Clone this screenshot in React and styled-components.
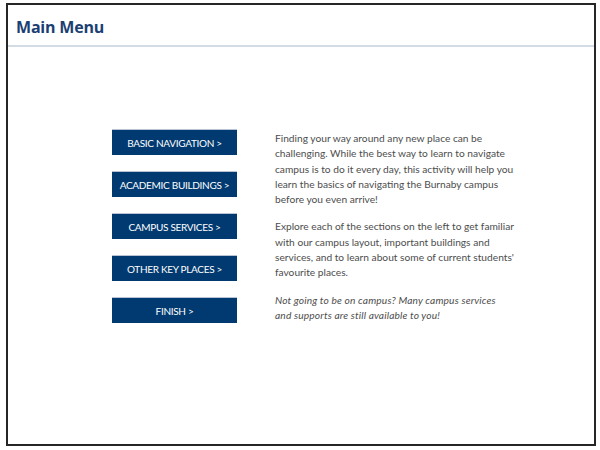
import React from "react";
import styled, { createGlobalStyle } from "styled-components";

const GlobalStyle = createGlobalStyle`
  html, body {
    margin: 0;
    padding: 0;
    background: #ffffff;
  }
`;

const Page = styled.div`
  width: 600px;
  height: 450px;
  padding: 3px 4px 4px 6px;
  box-sizing: border-box;
`;

const Frame = styled.div`
  height: 100%;
  border: 2px solid #262626;
  box-sizing: border-box;
  display: flex;
  flex-direction: column;
  background: #fff;
`;

const Header = styled.div`
  height: 42px;
  border-bottom: 2px solid #d3dbe5;
  display: flex;
  align-items: center;
  padding: 4px 8px 0;
  box-sizing: border-box;
`;

const Title = styled.h1`
  margin: 0;
  font-family: "Open Sans", "Noto Sans", sans-serif;
  font-weight: 700;
  font-size: 16px;
  color: #1b3f73;
  letter-spacing: -0.2px;
`;

const Content = styled.div`
  display: flex;
  padding: 82px 0 0 104px;
  gap: 38px;
`;

const Menu = styled.div`
  display: flex;
  flex-direction: column;
  gap: 16px;
`;

const MenuButton = styled.button`
  width: 125px;
  height: 26px;
  border: none;
  border-top: 1px solid #b8c4d4;
  background: #003a70;
  color: #fff;
  font-family: "Lato", "Open Sans", sans-serif;
  font-size: 10px;
  letter-spacing: -0.3px;
  text-transform: uppercase;
  padding: 0;
  cursor: pointer;
`;

const Copy = styled.div`
  width: 245px;
  padding-top: 2px;
  font-family: "Lato", "Open Sans", sans-serif;
  font-size: 10.2px;
  line-height: 15.3px;
  color: #4d4d4d;
`;

const Para = styled.p`
  margin: 0 0 12px;
  font-style: ${(p) => (p.$italic ? "italic" : "normal")};
  letter-spacing: ${(p) => (p.$italic ? "0.15px" : "0")};
`;

const items = [
  "Basic Navigation >",
  "Academic Buildings >",
  "Campus Services >",
  "Other Key Places >",
  "Finish >",
];

export default function App() {
  return (
    <Page>
      <GlobalStyle />
      <Frame>
        <Header>
          <Title>Main Menu</Title>
        </Header>
        <Content>
          <Menu>
            {items.map((label) => (
              <MenuButton key={label}>{label}</MenuButton>
            ))}
          </Menu>
          <Copy>
            <Para>
              Finding your way around any new place can be challenging. While
              the best way to learn to navigate campus is to do it every day,
              this activity will help you learn the basics of navigating the
              Burnaby campus before you even arrive!
            </Para>
            <Para>
              Explore each of the sections on the left to get familiar with our
              campus layout, important buildings and services, and to learn
              about some of current students' favourite places.
            </Para>
            <Para $italic>
              Not going to be on campus? Many campus services
              <br />
              and supports are still available to you!
            </Para>
          </Copy>
        </Content>
      </Frame>
    </Page>
  );
}
